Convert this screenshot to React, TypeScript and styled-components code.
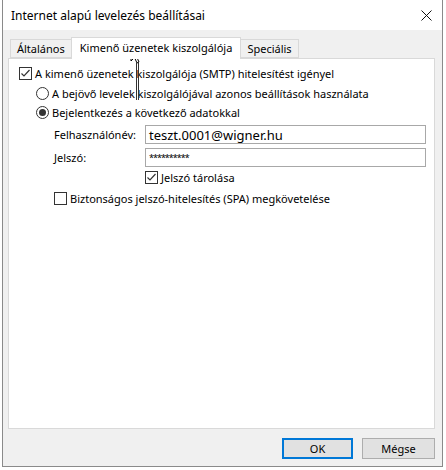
import * as React from "react";
import styled, { createGlobalStyle } from "styled-components";

const Global = createGlobalStyle`
  html, body {
    margin: 0;
    padding: 0;
    background: #ffffff;
    font-family: "Segoe UI", "Noto Sans", "Liberation Sans", sans-serif;
    font-size: 11px;
    color: #000;
  }
`;

const Page = styled.div`
  width: 446px;
  height: 470px;
  overflow: hidden;
  position: relative;
  background: #ffffff;
`;

const Dialog = styled.div`
  margin-left: 2px;
  width: 441px;
  height: 467px;
  box-sizing: border-box;
  border: 1px solid #8a8a8a;
  border-top: none;
  background: #f0f0f0;
  display: flex;
  flex-direction: column;
`;

const TitleBar = styled.div`
  height: 30px;
  background: #ffffff;
  display: flex;
  align-items: center;
  justify-content: space-between;
  padding: 0 10px 0 8px;
  flex-shrink: 0;
`;

const Title = styled.span`
  font-size: 12px;
  color: #000;
`;

const Body = styled.div`
  flex: 1;
  display: flex;
  flex-direction: column;
  padding: 7px 7px 0 5px;
`;

const TabStrip = styled.div`
  display: flex;
  align-items: flex-end;
  height: 21px;
  padding-left: 2px;
  position: relative;
  z-index: 1;
`;

const Tab = styled.div<{ $active?: boolean }>`
  box-sizing: border-box;
  height: ${({ $active }) => ($active ? "22px" : "19px")};
  margin-bottom: ${({ $active }) => ($active ? "-1px" : "0")};
  padding: ${({ $active }) => ($active ? "0 8px 3px" : "0 6px 1px")};
  background: ${({ $active }) => ($active ? "#ffffff" : "#f0f0f0")};
  border: 1px solid #d9d9d9;
  border-bottom: ${({ $active }) => ($active ? "none" : "1px solid #d9d9d9")};
  margin-left: ${({ $active }) => ($active ? "-1px" : "0")};
  margin-right: ${({ $active }) => ($active ? "-1px" : "0")};
  display: flex;
  align-items: center;
  white-space: nowrap;
  position: relative;
  z-index: ${({ $active }) => ($active ? 2 : 1)};
`;

const Panel = styled.div`
  height: 371px;
  box-sizing: border-box;
  background: #ffffff;
  border: 1px solid #d9d9d9;
  padding: 5px 10px;
  display: flex;
  flex-direction: column;
`;

const Row = styled.label<{ $indent?: number; $gap?: number }>`
  display: flex;
  align-items: center;
  height: 19px;
  margin-left: ${({ $indent }) => $indent ?? 0}px;
  margin-top: ${({ $gap }) => $gap ?? 0}px;
  gap: 3px;
  white-space: nowrap;
`;

const Box = styled.span`
  width: 13px;
  height: 13px;
  box-sizing: border-box;
  border: 1px solid #333333;
  background: #ffffff;
  display: inline-flex;
  align-items: center;
  justify-content: center;
  flex-shrink: 0;
`;

const Radio = styled.span<{ $on?: boolean }>`
  width: 13px;
  height: 13px;
  box-sizing: border-box;
  border: 1px solid #333333;
  border-radius: 50%;
  background: #ffffff;
  display: inline-flex;
  align-items: center;
  justify-content: center;
  flex-shrink: 0;

  &::after {
    content: "";
    display: ${({ $on }) => ($on ? "block" : "none")};
    width: 7px;
    height: 7px;
    border-radius: 50%;
    background: #333333;
  }
`;

const Fields = styled.div`
  display: grid;
  grid-template-columns: 91px 281px;
  row-gap: 4px;
  margin-left: 35px;
  margin-top: 3px;
  align-items: center;
`;

const FieldLabel = styled.span`
  white-space: nowrap;
`;

const Input = styled.div<{ $secret?: boolean }>`
  height: 19px;
  box-sizing: border-box;
  border: 1px solid #a8a8a8;
  background: #ffffff;
  padding: 0 3px;
  display: flex;
  align-items: center;
  font-size: ${({ $secret }) => ($secret ? "9px" : "13px")};
  letter-spacing: ${({ $secret }) => ($secret ? "-1px" : "0")};
`;

const Footer = styled.div`
  display: flex;
  justify-content: flex-end;
  gap: 9px;
  padding: 9px 0 0;
`;

const Button = styled.div<{ $primary?: boolean }>`
  width: ${({ $primary }) => ($primary ? "71px" : "73px")};
  height: 21px;
  box-sizing: border-box;
  background: #e1e1e1;
  border: ${({ $primary }) => ($primary ? "2px solid #0078d7" : "1px solid #adadad")};
  display: flex;
  align-items: center;
  justify-content: center;
`;

const Cursor = styled.svg`
  position: absolute;
  left: 130px;
  top: 46px;
`;

const Check = () => (
  <svg width="11" height="11" viewBox="0 0 11 11">
    <path d="M1.5 5.5 L4 8 L9.5 2" fill="none" stroke="#333" strokeWidth="1.2" />
  </svg>
);

const Close = () => (
  <svg width="11" height="11" viewBox="0 0 11 11">
    <path d="M0.5 0.5 L10.5 10.5 M10.5 0.5 L0.5 10.5" stroke="#111" strokeWidth="1" />
  </svg>
);

export default function App() {
  return (
    <>
      <Global />
      <Page>
        <Dialog>
          <TitleBar>
            <Title>Internet alapú levelezés beállításai</Title>
            <Close />
          </TitleBar>
          <Body>
            <TabStrip>
              <Tab>Általános</Tab>
              <Tab $active>Kimenő üzenetek kiszolgálója</Tab>
              <Tab>Speciális</Tab>
            </TabStrip>
            <Panel>
              <Row>
                <Box>
                  <Check />
                </Box>
                A kimenő üzenetek kiszolgálója (SMTP) hitelesítést igényel
              </Row>
              <Row $indent={17} $gap={1}>
                <Radio />
                A bejövő levelek kiszolgálójával azonos beállítások használata
              </Row>
              <Row $indent={17}>
                <Radio $on />
                Bejelentkezés a következő adatokkal
              </Row>
              <Fields>
                <FieldLabel>Felhasználónév:</FieldLabel>
                <Input>teszt.0001@wigner.hu</Input>
                <FieldLabel>Jelszó:</FieldLabel>
                <Input $secret>**********</Input>
              </Fields>
              <Row $indent={126} $gap={1}>
                <Box>
                  <Check />
                </Box>
                Jelszó tárolása
              </Row>
              <Row $indent={35} $gap={2}>
                <Box />
                Biztonságos jelszó-hitelesítés (SPA) megkövetelése
              </Row>
            </Panel>
            <Footer>
              <Button $primary>OK</Button>
              <Button>Mégse</Button>
            </Footer>
          </Body>
        </Dialog>
        <Cursor width="14" height="56" viewBox="0 0 14 56">
          <path d="M1 1 L1 15 L4.5 11.5 L7 17 L9 16 L6.5 10.5 L11 10.5 Z" fill="#fff" stroke="#000" strokeWidth="1" />
          <path d="M6.5 17 L6.5 54 M8.5 16 L8.5 54" stroke="#333" strokeWidth="1" />
        </Cursor>
      </Page>
    </>
  );
}
